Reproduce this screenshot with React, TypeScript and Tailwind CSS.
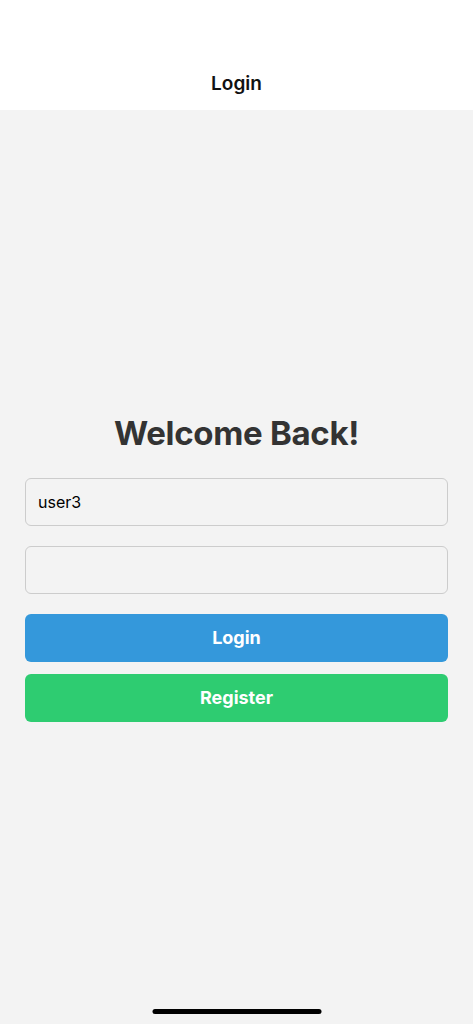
import React, { useState } from "react";

const font = { fontFamily: "Inter, 'Noto Sans', sans-serif" };

export default function App() {
  const [username, setUsername] = useState("user3");
  const [password, setPassword] = useState("");

  return (
    <div className="relative flex min-h-[1024px] w-full flex-col bg-[#f3f3f3]" style={font}>
      <header className="flex h-[110px] items-end justify-center bg-white pb-[15px]">
        <h1 className="text-[19px] leading-[22px] font-semibold text-[#111]">Login</h1>
      </header>

      <main className="flex flex-1 flex-col justify-center px-[25px]">
        <h2 className="mb-[25px] text-center text-[33px] leading-[40px] font-bold tracking-[-0.3px] text-[#333]">
          Welcome Back!
        </h2>
        <input
          value={username}
          onChange={(e) => setUsername(e.target.value)}
          className="mb-[20px] h-[48px] w-full rounded-[6px] border border-[#cccccc] bg-[#f3f3f3] px-[12px] text-[16px] text-black outline-none"
        />
        <input
          type="password"
          value={password}
          onChange={(e) => setPassword(e.target.value)}
          className="mb-[20px] h-[48px] w-full rounded-[6px] border border-[#cccccc] bg-[#f3f3f3] px-[12px] text-[16px] text-black outline-none"
        />
        <button className="mb-[12px] flex h-[48px] w-full items-center justify-center rounded-[6px] bg-[#3498db] text-[18px] font-bold text-white">
          Login
        </button>
        <button className="flex h-[48px] w-full items-center justify-center rounded-[6px] bg-[#2ecc71] text-[18px] font-bold text-white">
          Register
        </button>
      </main>

      <div className="absolute bottom-[10px] left-1/2 h-[5px] w-[169px] -translate-x-1/2 rounded-full bg-black" />
    </div>
  );
}
